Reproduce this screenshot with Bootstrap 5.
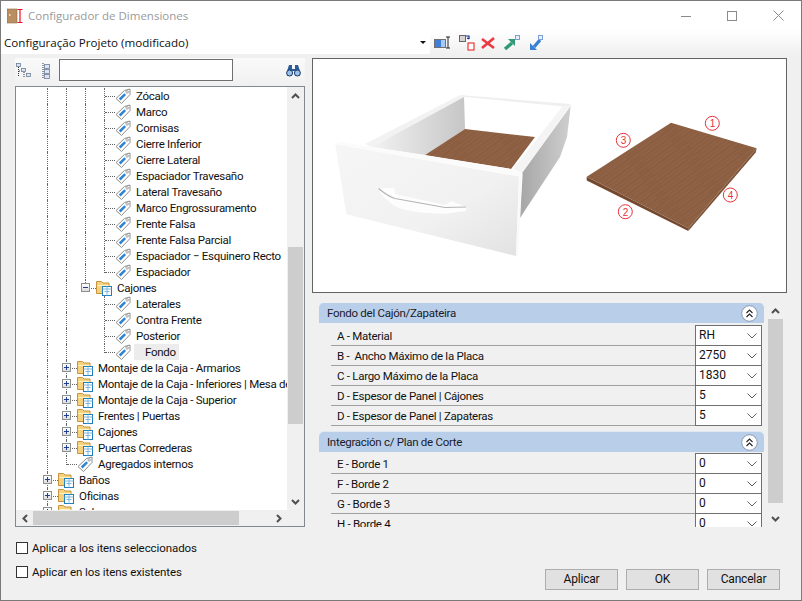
<!DOCTYPE html>
<html lang="es"><head><meta charset="utf-8"><title>Configurador de Dimensiones</title>
<link href="https://cdn.jsdelivr.net/npm/bootstrap@5.3.0/dist/css/bootstrap.min.css" rel="stylesheet">
<style>
html,body{margin:0;height:601px;overflow:hidden;background:#f0f0f0}
body,select,input,button{font-family:Roboto,"Liberation Sans",Arial,sans-serif;font-size:11.5px;letter-spacing:-.28px;color:#111}
.win{width:802px;height:601px;border:1px solid #7a7a7a;background:#f0f0f0}
.ttl{height:29px;background:#fff;color:#9a9a9a;padding-left:6px}
.ttl-t{margin-left:4px;font-family:"Open Sans",sans-serif;font-size:11.5px;letter-spacing:0}
.wctl{width:46px;text-align:center}
.tbar{height:25px;background:linear-gradient(#fff,#f0f0f0)}
.cmb{width:429px;height:23px;background:#fff;padding:0 0 0 3px}
.cmb-t{font-family:"Open Sans",sans-serif;font-size:11.6px;letter-spacing:0}
.tbi{margin-left:2px}
.mainr{height:472px;padding:3px 0 0 14px}
.lcol{width:290px}
.tree-tb{height:28px;background:linear-gradient(#fafafa,#f0f0f0)}
.srch{width:174px;height:22px;margin-left:7px;margin-top:1px;border:1px solid #707070;border-radius:0;padding:0 3px;font-size:12px;min-height:0}
.srch-bn{margin:5px 3px 0 0}
.tree{height:441px;border:1px solid #828790;background:#f0f0f0}
.tview{height:423px;background:#fff;flex:1 1 auto;overflow:hidden;min-width:0;padding-top:1px}
.trw{height:16px;display:flex;padding-left:31px;white-space:nowrap;line-height:16px}
.gd{flex:0 0 19px;border-left:1px dotted #666}
.em{flex:0 0 19px}
.cn{flex:0 0 11px;border-left:1px dotted #666;position:relative}
.cn::after{content:"";position:absolute;left:0;right:0;top:8px;border-top:1px dotted #666}
.cn.lst{height:9px;flex-basis:11px}
.bx{position:absolute;z-index:1;left:-5px;top:3px;width:9px;height:9px;border:1px solid #8f8f8f;background:linear-gradient(#fff,#dcdcdc);}
.bx::before{content:"";position:absolute;left:1px;right:1px;top:3px;height:1px;background:#22408a}
.bx.pl::after{content:"";position:absolute;top:1px;bottom:1px;left:3px;width:1px;background:#22408a}
.ic{flex:0 0 16px;width:16px;height:16px;display:block}
.lb{margin-left:5px}
.lb-sel{margin-left:3px;padding:0 3px 0 11px;background:#ececec}
.vsb{flex:0 0 17px;background:#f0f0f0;display:flex;flex-direction:column;align-items:center}
.sarr{flex:0 0 17px;display:flex;align-items:center;justify-content:center;width:100%}
.vth{width:15px;background:#cdcdcd}
.tr-sp1{flex:0 0 143px}.tr-th{flex:0 0 177px}
.hsb{height:16px;background:#f0f0f0;display:flex}
.hsb .sarr{flex:0 0 17px}
.hth{flex:0 0 206px;margin:1px 0;background:#cdcdcd}
.rcol{margin-left:7px;width:475px}
.prev{height:235px;border:1px solid #646464;background:#fff;display:block;overflow:hidden}
.prev svg{display:block}
.props{height:234px;padding:10px 0 0 7px}
.plist{width:445px;height:224px;overflow:hidden}
.shd{height:20px;background:#b9cfe9;border-radius:5px 5px 0 0;padding:0 6px 0 8px;line-height:20px;box-shadow:0 -1px 0 #dfe8f3;color:#1a1a2a}
.shd-ic{width:17px;height:17px;display:block}
.rows{padding:3px 2px 6px 12px}
.rows-b{padding-top:2px}
.prow{height:20px;border-bottom:1px solid #a0a0a0;padding-left:6px}
.plabel{flex:1 1 auto;line-height:21px}
.psel{flex:0 0 67px;width:67px;height:21px;margin-top:-1px;padding:0 0 2px 3px;border:1px solid #707070;border-radius:0;font-size:12px;letter-spacing:0;color:#111;line-height:16px;background-color:#fff;background-position:right 4px center;background-size:10px 6px;min-height:0;background-image:url("data:image/svg+xml,%3csvg xmlns='http://www.w3.org/2000/svg' viewBox='0 0 10 6'%3e%3cpath fill='none' stroke='%23606060' d='M.5.5 5 5 9.500.5'/%3e%3c/svg%3e")}
.pvs{width:15px;margin-left:3px;height:224px}
.pvs .sarr{flex:0 0 16px}
.pv-th{flex:0 0 184px}
.botm{height:73px;padding:0 21px 0 15px}
.chk{padding:15px 0 0 0;letter-spacing:-.08px}
.chk-r{height:12px;margin-bottom:12px;line-height:12px}
.form-check-input.cbx{width:12px;height:12px;border:1px solid #333;border-radius:0;margin:0 4px 0 0;background-color:#fff}
.bts{padding-bottom:10px;gap:8px}
.bt{width:73px;height:21px;padding:0;font-size:12px;letter-spacing:-.2px;line-height:19px;background:#e1e1e1;border:1px solid #adadad;border-radius:0;color:#111}
</style></head><body>
<svg width="0" height="0" class="position-absolute">
<defs>
<symbol id="tag" viewBox="0 0 16 16"><path d="M1 10.500 9.500 2.500 15 1 15 6.500 6.500 15.500Z" fill="#fff" stroke="#8c8c8c"/><path d="M3.800 10.600 9.400 5.200 11 7 5.600 12.400Z" fill="#2f84d0"/><circle cx="12.200" cy="3.900" r="1.200" fill="#fff" stroke="#888" stroke-width=".8"/></symbol>
<symbol id="fld" viewBox="0 0 16 16"><path d="M.5 13.500V1.500h5l1.500 1.500h6v10.500Z" fill="#f6d27e" stroke="#c9933c"/><path d="M1.500 5.500h11" stroke="#fff3c8"/><rect x="6.500" y="6.500" width="9" height="9" fill="#fff" stroke="#1f7fbf"/><path d="M6.500 9h9M11 6.500v9M8.500 11.500h5" stroke="#7fb7dc" fill="none"/></symbol>
<linearGradient id="inL" x1="0" x2="1" y1="0" y2="0"><stop offset="0" stop-color="#f2f2f2"/><stop offset="1" stop-color="#c6c6c6"/></linearGradient>
<linearGradient id="outR" x1="0" x2="1" y1="0" y2="0"><stop offset="0" stop-color="#a6a6a6"/><stop offset="1" stop-color="#cfcfcf"/></linearGradient>
<linearGradient id="frt" x1="0" x2="1" y1="0" y2="1"><stop offset="0" stop-color="#f6f6f6"/><stop offset=".6" stop-color="#f1f1f1"/><stop offset="1" stop-color="#e2e2e2"/></linearGradient>
<pattern id="wood" width="46" height="7" patternUnits="userSpaceOnUse" patternTransform="rotate(-36)"><rect width="46" height="7" fill="#8d5f42"/><path d="M0 1.500h46M0 5h30" stroke="#865a3e" stroke-width=".7"/><path d="M0 3h46M12 6.300h34" stroke="#94664a" stroke-width=".7"/></pattern>
</defs></svg>

<div class="win d-flex flex-column">
 <div class="ttl d-flex align-items-center">
  <svg width="17" height="16" viewBox="0 0 17 16"><rect x="0" y="1" width="10" height="14" fill="#b98f62" stroke="#8f6b45" stroke-width=".6"/><rect x="2" y="6" width="1.500" height="2" fill="#e6d8c2"/><path d="M13 1.500v13M10.500 1.500h5M10.500 14.500h5" stroke="#e5132a" stroke-width="1.200"/></svg>
  <span class="ttl-t flex-grow-1">Configurador de Dimensiones</span>
  <div class="wctl"><svg width="10" height="10"><path d="M0 5.500h10" stroke="#8a8a8a"/></svg></div>
  <div class="wctl"><svg width="10" height="10"><rect x=".5" y=".5" width="9" height="9" fill="none" stroke="#8a8a8a"/></svg></div>
  <div class="wctl"><svg width="11" height="11"><path d="M.5.5l10 10M10.500.5l-10 10" stroke="#8a8a8a"/></svg></div>
 </div>
 <div class="tbar d-flex align-items-center">
  <div class="cmb d-flex align-items-center justify-content-between">
   <span class="cmb-t">Configuração Projeto (modificado)</span>
   <svg width="6" height="3" class="me-1"><path d="M0 0h6L3 3Z" fill="#111"/></svg>
  </div>
  <svg class="tbi" width="126" height="20" viewBox="0 0 126 20">
   <rect x="2.500" y="6.500" width="11" height="8" fill="#3f7fdc" stroke="#707070"/><rect x="9" y="7" width="4" height="7" fill="#a9c8f2"/><path d="M14 4h4M14 15h4M16 4v11" stroke="#222" fill="none"/>
   <rect x="27.500" y="2.500" width="6" height="6" fill="#d8d2d2" stroke="#666"/><path d="M34 3h3v3M37 6l-2-1" stroke="#112a88" fill="none" stroke-width="1.200"/><rect x="36" y="10" width="6" height="7" fill="#fff" stroke="#e11" stroke-width="1"/>
   <path d="M50 6l12 9M62 5 50 15" stroke="#ec3a42" stroke-width="2.600"/>
   <path d="M73 16l7-6" stroke="#2f9a75" stroke-width="3.400"/><path d="M76 6h7v7Z" fill="#2f9a75"/><rect x="83.500" y="2.500" width="4" height="4" fill="#e8f0fb" stroke="#7b9fd6"/>
   <path d="M108 7l-6 7" stroke="#3a7fd3" stroke-width="3.400"/><path d="M98 10v7h7Z" fill="#3a7fd3"/><rect x="106.500" y="2.500" width="4" height="4" fill="#e8f0fb" stroke="#7b9fd6"/>
  </svg>
 </div>
 <div class="mainr d-flex">
  <div class="lcol d-flex flex-column">
   <div class="tree-tb d-flex align-items-start">
    <svg width="37" height="24" viewBox="0 0 37 24" class="flex-shrink-0"><g fill="#dbe4f2" stroke="#6f7f9a" stroke-width=".8"><rect x="1.500" y="5.500" width="4" height="3"/><rect x="6.500" y="10.500" width="4" height="3"/><rect x="11.500" y="15.500" width="4" height="3"/></g><path d="M3.500 9v10M4 13h2M9 14v5" stroke="#333" stroke-dasharray="1 1" fill="none"/><g fill="#dbe4f2" stroke="#6f7f9a" stroke-width=".8"><rect x="29.500" y="6.500" width="5" height="4"/><rect x="29.500" y="11.500" width="5" height="4"/><rect x="29.500" y="16.500" width="5" height="4"/></g><path d="M28 5v16" stroke="#333" stroke-dasharray="1 1" fill="none"/></svg>
    <input class="form-control srch" type="text" aria-label="Buscar">
    <span class="flex-grow-1"></span>
    <svg width="16" height="14" viewBox="0 0 16 14" class="srch-bn"><g><path d="M1 8 3 2h3v4H9V2h3l2 6v5H9V8H6v5H1Z" fill="#2c5c98"/><circle cx="3.600" cy="10" r="3" fill="#9cc0e8" stroke="#1b3d70"/><circle cx="11.400" cy="10" r="3" fill="#9cc0e8" stroke="#1b3d70"/></g></svg>
   </div>
   <div class="tree d-flex flex-column">
    <div class="d-flex">
     <div class="tview">
<div class="trw"><i class="gd"></i><i class="gd"></i><i class="gd"></i><i class="cn"></i><svg class="ic"><use href="#tag"/></svg><span class="lb">Zócalo</span></div>
<div class="trw"><i class="gd"></i><i class="gd"></i><i class="gd"></i><i class="cn"></i><svg class="ic"><use href="#tag"/></svg><span class="lb">Marco</span></div>
<div class="trw"><i class="gd"></i><i class="gd"></i><i class="gd"></i><i class="cn"></i><svg class="ic"><use href="#tag"/></svg><span class="lb">Cornisas</span></div>
<div class="trw"><i class="gd"></i><i class="gd"></i><i class="gd"></i><i class="cn"></i><svg class="ic"><use href="#tag"/></svg><span class="lb">Cierre Inferior</span></div>
<div class="trw"><i class="gd"></i><i class="gd"></i><i class="gd"></i><i class="cn"></i><svg class="ic"><use href="#tag"/></svg><span class="lb">Cierre Lateral</span></div>
<div class="trw"><i class="gd"></i><i class="gd"></i><i class="gd"></i><i class="cn"></i><svg class="ic"><use href="#tag"/></svg><span class="lb">Espaciador Travesaño</span></div>
<div class="trw"><i class="gd"></i><i class="gd"></i><i class="gd"></i><i class="cn"></i><svg class="ic"><use href="#tag"/></svg><span class="lb">Lateral Travesaño</span></div>
<div class="trw"><i class="gd"></i><i class="gd"></i><i class="gd"></i><i class="cn"></i><svg class="ic"><use href="#tag"/></svg><span class="lb">Marco Engrossuramento</span></div>
<div class="trw"><i class="gd"></i><i class="gd"></i><i class="gd"></i><i class="cn"></i><svg class="ic"><use href="#tag"/></svg><span class="lb">Frente Falsa</span></div>
<div class="trw"><i class="gd"></i><i class="gd"></i><i class="gd"></i><i class="cn"></i><svg class="ic"><use href="#tag"/></svg><span class="lb">Frente Falsa Parcial</span></div>
<div class="trw"><i class="gd"></i><i class="gd"></i><i class="gd"></i><i class="cn"></i><svg class="ic"><use href="#tag"/></svg><span class="lb">Espaciador − Esquinero Recto</span></div>
<div class="trw"><i class="gd"></i><i class="gd"></i><i class="gd"></i><i class="cn lst"></i><svg class="ic"><use href="#tag"/></svg><span class="lb">Espaciador</span></div>
<div class="trw"><i class="gd"></i><i class="gd"></i><i class="cn lst"><b class="bx"></b></i><svg class="ic"><use href="#fld"/></svg><span class="lb">Cajones</span></div>
<div class="trw"><i class="gd"></i><i class="gd"></i><i class="em"></i><i class="cn"></i><svg class="ic"><use href="#tag"/></svg><span class="lb">Laterales</span></div>
<div class="trw"><i class="gd"></i><i class="gd"></i><i class="em"></i><i class="cn"></i><svg class="ic"><use href="#tag"/></svg><span class="lb">Contra Frente</span></div>
<div class="trw"><i class="gd"></i><i class="gd"></i><i class="em"></i><i class="cn"></i><svg class="ic"><use href="#tag"/></svg><span class="lb">Posterior</span></div>
<div class="trw"><i class="gd"></i><i class="gd"></i><i class="em"></i><i class="cn lst"></i><svg class="ic"><use href="#tag"/></svg><span class="lb-sel">Fondo</span></div>
<div class="trw"><i class="gd"></i><i class="cn"><b class="bx pl"></b></i><svg class="ic"><use href="#fld"/></svg><span class="lb">Montaje de la Caja - Armarios</span></div>
<div class="trw"><i class="gd"></i><i class="cn"><b class="bx pl"></b></i><svg class="ic"><use href="#fld"/></svg><span class="lb">Montaje de la Caja - Inferiores | Mesa de</span></div>
<div class="trw"><i class="gd"></i><i class="cn"><b class="bx pl"></b></i><svg class="ic"><use href="#fld"/></svg><span class="lb">Montaje de la Caja - Superior</span></div>
<div class="trw"><i class="gd"></i><i class="cn"><b class="bx pl"></b></i><svg class="ic"><use href="#fld"/></svg><span class="lb">Frentes | Puertas</span></div>
<div class="trw"><i class="gd"></i><i class="cn"><b class="bx pl"></b></i><svg class="ic"><use href="#fld"/></svg><span class="lb">Cajones</span></div>
<div class="trw"><i class="gd"></i><i class="cn"><b class="bx pl"></b></i><svg class="ic"><use href="#fld"/></svg><span class="lb">Puertas Correderas</span></div>
<div class="trw"><i class="gd"></i><i class="cn lst"></i><svg class="ic"><use href="#tag"/></svg><span class="lb">Agregados internos</span></div>
<div class="trw"><i class="cn"><b class="bx pl"></b></i><svg class="ic"><use href="#fld"/></svg><span class="lb">Baños</span></div>
<div class="trw"><i class="cn"><b class="bx pl"></b></i><svg class="ic"><use href="#fld"/></svg><span class="lb">Oficinas</span></div>
<div class="trw"><i class="cn"><b class="bx pl"></b></i><svg class="ic"><use href="#fld"/></svg><span class="lb">Salas</span></div>
     </div>
     <div class="vsb">
      <div class="sarr"><svg width="9" height="6"><path d="M1 5l3.500-3.500L8 5" fill="none" stroke="#505050" stroke-width="2"/></svg></div>
      <div class="tr-sp1"></div><div class="vth tr-th"></div><div class="flex-grow-1"></div>
      <div class="sarr"><svg width="9" height="6"><path d="M1 1l3.500 3.500L8 1" fill="none" stroke="#505050" stroke-width="2"/></svg></div>
     </div>
    </div>
    <div class="hsb">
     <div class="sarr"><svg width="6" height="9"><path d="M5 1L1.500 4.500 5 8" fill="none" stroke="#505050" stroke-width="2"/></svg></div>
     <div class="hth"></div><div class="flex-grow-1"></div>
     <div class="sarr"><svg width="6" height="9"><path d="M1 1l3.500 3.500L1 8" fill="none" stroke="#505050" stroke-width="2"/></svg></div>
     <div class="sarr"></div>
    </div>
   </div>
  </div>
  <div class="rcol d-flex flex-column">
   <div class="prev">
    <svg width="473" height="233" viewBox="313 59 473 233">
     <polygon points="465,95 570.700,105 562,178 465,150" fill="#fff"/>
     <polygon points="365,144 460,95 464,97 372,147" fill="#f2f2f2"/>
     <polygon points="372,147 464,97 465,129 425,155" fill="url(#inL)"/>
     <polygon points="460,95 570.700,104 570,107 464,97" fill="#efefef"/>
     <polygon points="465,129 535,137 511,169 425,155" fill="url(#wood)"/>
     <polygon points="522,173 570.700,106 567,137 560,157 520,218" fill="url(#outR)"/>
     <polygon points="570.700,105 563,106 513,169 522,173" fill="#f4f4f4"/>
     <polygon points="335.300,144.300 340,142 372,147 511,169 522.700,173.300 519,176" fill="#fbfbfb"/>
     <polygon points="335.300,144.300 519,176.500 516,256 346.300,214.300" fill="url(#frt)"/>
     <polygon points="519,176.500 522.700,173.300 518,255 516,256" fill="#fafafa"/>
     <path d="M378.500 188.500 394 187.500 395 194 445 205 451 201 466.500 207 466 211 446 213.500C425 214 400 211 392 204C385 199 380 194 378.500 188.500Z" fill="#fdfdfd"/>
     <path d="M378.500 188.500C384 193 390 197 395 198.500L445 207.500 466 207" fill="none" stroke="#b4b4b4" stroke-width="1.200"/>
     <polygon points="586.700,176.700 688.300,228.300 688.300,231 586.700,180.500" fill="#74492f"/>
     <polygon points="688.300,228.300 756.700,148.300 755.700,152.500 688.300,231" fill="#7c5237"/>
     <polygon points="671,122.700 756.700,148.300 688.300,228.300 586.700,176.700" fill="url(#wood)"/>
     <g fill="#fff" stroke="#e8323c" font-family="Liberation Sans,Arial,sans-serif" font-size="10" text-anchor="middle">
      <circle cx="712.300" cy="123.300" r="7"/><circle cx="623.300" cy="140.300" r="7"/><circle cx="625.300" cy="211.700" r="7"/><circle cx="730.300" cy="195" r="7"/>
      <g fill="#e8323c" stroke="none"><text x="712.300" y="127">1</text><text x="623.300" y="144">3</text><text x="625.300" y="215.500">2</text><text x="730.300" y="198.700">4</text></g>
     </g>
    </svg>
   </div>
   <div class="props d-flex">
    <div class="plist">
     <div class="shd d-flex justify-content-between align-items-center"><span>Fondo del Cajón/Zapateira</span><svg class="shd-ic" viewBox="0 0 17 17"><circle cx="8.500" cy="8.500" r="7.800" fill="#fff" stroke="#8a9ab0"/><path d="M5.500 8l3-3 3 3M5.500 12l3-3 3 3" fill="none" stroke="#222" stroke-width="1.100"/></svg></div>
     <div class="rows">
      <div class="prow d-flex"><span class="plabel">A - Material</span><select class="form-select psel" aria-label="Material"><option>RH</option></select></div>
      <div class="prow d-flex"><span class="plabel">B -&nbsp; Ancho Máximo de la Placa</span><select class="form-select psel" aria-label="Ancho"><option>2750</option></select></div>
      <div class="prow d-flex"><span class="plabel">C - Largo Máximo de la Placa</span><select class="form-select psel" aria-label="Largo"><option>1830</option></select></div>
      <div class="prow d-flex"><span class="plabel">D - Espesor de Panel | Cájones</span><select class="form-select psel" aria-label="Espesor cajones"><option>5</option></select></div>
      <div class="prow d-flex"><span class="plabel">D - Espesor de Panel | Zapateras</span><select class="form-select psel" aria-label="Espesor zapateras"><option>5</option></select></div>
     </div>
     <div class="shd d-flex justify-content-between align-items-center"><span>Integración c/ Plan de Corte</span><svg class="shd-ic" viewBox="0 0 17 17"><circle cx="8.500" cy="8.500" r="7.800" fill="#fff" stroke="#8a9ab0"/><path d="M5.500 8l3-3 3 3M5.500 12l3-3 3 3" fill="none" stroke="#222" stroke-width="1.100"/></svg></div>
     <div class="rows rows-b">
      <div class="prow d-flex"><span class="plabel">E - Borde 1</span><select class="form-select psel" aria-label="Borde 1"><option>0</option></select></div>
      <div class="prow d-flex"><span class="plabel">F - Borde 2</span><select class="form-select psel" aria-label="Borde 2"><option>0</option></select></div>
      <div class="prow d-flex"><span class="plabel">G - Borde 3</span><select class="form-select psel" aria-label="Borde 3"><option>0</option></select></div>
      <div class="prow d-flex"><span class="plabel">H - Borde 4</span><select class="form-select psel" aria-label="Borde 4"><option>0</option></select></div>
     </div>
    </div>
    <div class="vsb pvs">
     <div class="sarr"><svg width="9" height="6"><path d="M1 5l3.500-3.500L8 5" fill="none" stroke="#505050" stroke-width="2"/></svg></div>
     <div class="vth pv-th"></div><div class="flex-grow-1"></div>
     <div class="sarr"><svg width="9" height="6"><path d="M1 1l3.500 3.500L8 1" fill="none" stroke="#505050" stroke-width="2"/></svg></div>
    </div>
   </div>
  </div>
 </div>
 <div class="botm d-flex justify-content-between">
  <div class="chk">
   <div class="chk-r d-flex align-items-center"><input class="form-check-input cbx" type="checkbox" id="c1"><label for="c1">Aplicar a los itens seleccionados</label></div>
   <div class="chk-r d-flex align-items-center"><input class="form-check-input cbx" type="checkbox" id="c2"><label for="c2">Aplicar en los itens existentes</label></div>
  </div>
  <div class="bts d-flex align-items-end">
   <button class="btn bt" type="button">Aplicar</button>
   <button class="btn bt" type="button">OK</button>
   <button class="btn bt" type="button">Cancelar</button>
  </div>
 </div>
</div>
<script src="https://cdn.jsdelivr.net/npm/bootstrap@5.3.0/dist/js/bootstrap.bundle.min.js"></script>
</body></html>
